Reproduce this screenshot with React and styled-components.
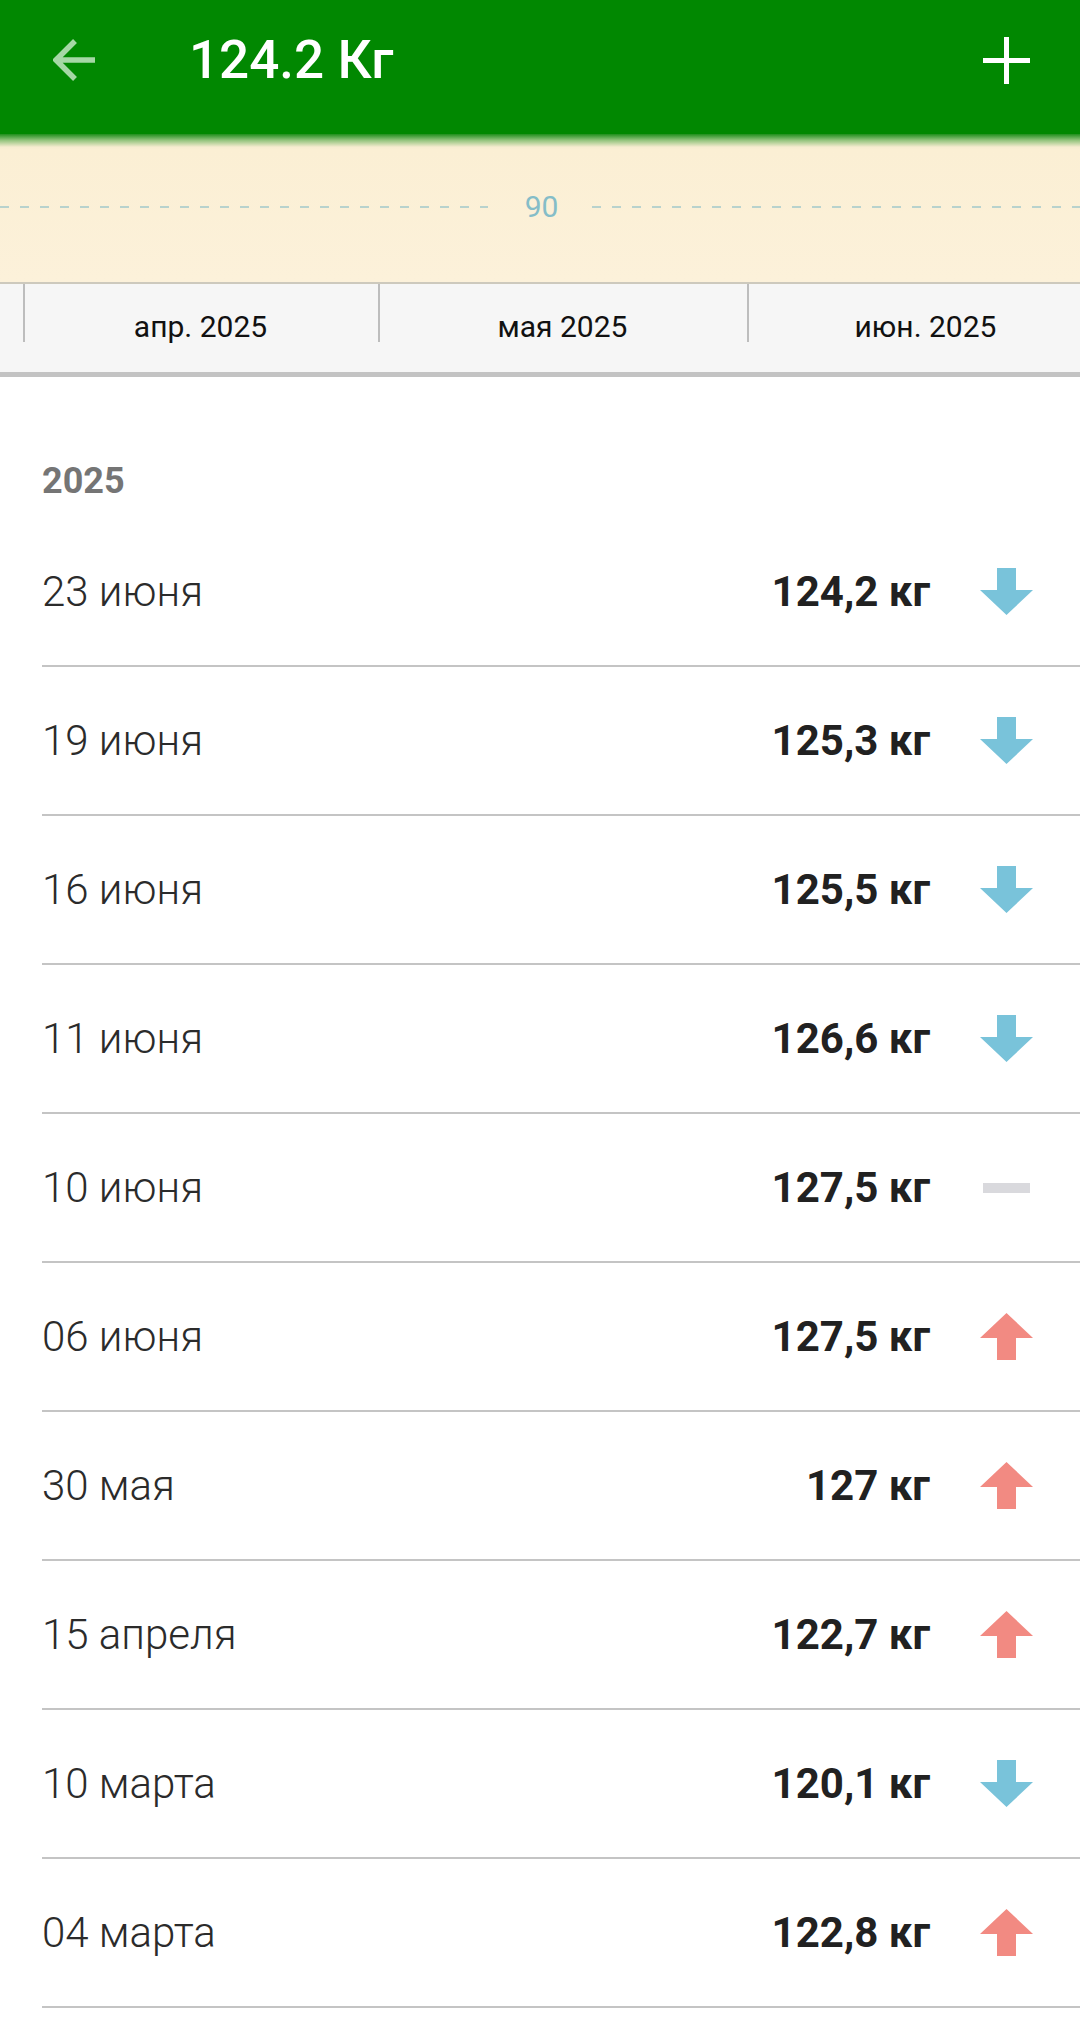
import React from "react";
import styled, { createGlobalStyle } from "styled-components";

const GlobalStyle = createGlobalStyle`
  html, body { margin: 0; padding: 0; background: #ffffff; }
  body { font-family: Roboto, "Noto Sans", "Liberation Sans", sans-serif; -webkit-font-smoothing: antialiased; }
  * { box-sizing: border-box; }
`;

const Page = styled.div`
  width: 1080px;
  min-height: 2019px;
  background: #ffffff;
  overflow: hidden;
`;

const Toolbar = styled.header`
  height: 134px;
  background: #018801;
  display: flex;
  align-items: center;
  padding: 0 50px 14px 53px;
`;

const IconButton = styled.div`
  display: flex;
  align-items: center;
  justify-content: center;
  width: ${(p) => p.$w}px;
  height: ${(p) => p.$h}px;
  flex-shrink: 0;
`;

const Title = styled.h1`
  margin: 0 0 0 92px;
  flex: 1;
  font-family: Roboto, sans-serif;
  font-weight: 500;
  font-size: 53px;
  line-height: 60px;
  color: #ffffff;
`;

const Chart = styled.section`
  height: 148px;
  background: linear-gradient(
    to bottom,
    #1f8f1c 0px,
    #8fc27a 6px,
    #f6ecd0 13px,
    #fbefd4 16px,
    #fcf1da 148px
  );
  padding-top: 58px;
`;

const GridLine = styled.div`
  display: flex;
  align-items: center;
  height: 30px;
`;

const Dash = styled.div`
  flex: 1;
  height: 2px;
  background-image: repeating-linear-gradient(
    to right,
    #b8d2cd 0px,
    #b8d2cd 9px,
    transparent 9px,
    transparent 20px
  );
`;

const GridLabel = styled.span`
  padding: 0 34px 0 37px;
  font-size: 30px;
  line-height: 30px;
  color: #85bdc8;
`;

const Axis = styled.div`
  height: 95px;
  background: #f6f6f6;
  border-top: 2px solid #cdc9bd;
  border-bottom: 5px solid #c3c3c3;
  display: flex;
  overflow: hidden;
`;

const AxisLead = styled.div`
  width: 23px;
  flex-shrink: 0;
`;

const Month = styled.div`
  position: relative;
  width: ${(p) => p.$w}px;
  flex-shrink: 0;
  display: flex;
  justify-content: center;
  padding-top: 26px;
  font-size: 30px;
  line-height: 34px;
  color: #111111;

  &::before {
    content: "";
    position: absolute;
    left: 0;
    top: 0;
    width: 2px;
    height: 58px;
    background: #bdbdbd;
  }
`;

const Year = styled.h2`
  margin: 0;
  height: 141px;
  padding: 86px 42px 0;
  font-size: 36px;
  line-height: 36px;
  font-weight: 700;
  color: #757575;
`;

const Row = styled.div`
  height: 149px;
  margin-left: 42px;
  border-bottom: 2px solid #c4c4c4;
  display: flex;
  align-items: center;
`;

const DateText = styled.span`
  flex: 1;
  font-size: 42px;
  font-weight: 300;
  color: #2b2b2b;
  line-height: 50px;
`;

const Weight = styled.span`
  font-size: 42px;
  font-weight: 700;
  color: #212121;
  line-height: 50px;
`;

const Trend = styled.div`
  width: 53px;
  height: 47px;
  margin: 0 47px 0 50px;
  display: flex;
  align-items: center;
  justify-content: center;
  flex-shrink: 0;
`;

const Flat = styled.div`
  width: 47px;
  height: 10px;
  background: #d9d9dd;
`;

const BackIcon = () => (
  <svg width="44" height="44" viewBox="0 0 44 44">
    <path
      d="M42 22H5 M22 3L3 22L22 41"
      fill="none"
      stroke="#a6d8a6"
      strokeWidth="5.5"
    />
  </svg>
);

const PlusIcon = () => (
  <svg width="47" height="47" viewBox="0 0 47 47">
    <path d="M23.5 0V47 M0 23.5H47" fill="none" stroke="#ffffff" strokeWidth="5" />
  </svg>
);

const Arrow = ({ dir }) => (
  <svg width="53" height="47" viewBox="0 0 53 47">
    {dir === "down" ? (
      <polygon points="17,0 36,0 36,22 53,22 26.5,47 0,22 17,22" fill="#79c3da" />
    ) : (
      <polygon points="26.5,0 53,25 36,25 36,47 17,47 17,25 0,25" fill="#f28a82" />
    )}
  </svg>
);

const entries = [
  { date: "23 июня", value: "124,2 кг", trend: "down" },
  { date: "19 июня", value: "125,3 кг", trend: "down" },
  { date: "16 июня", value: "125,5 кг", trend: "down" },
  { date: "11 июня", value: "126,6 кг", trend: "down" },
  { date: "10 июня", value: "127,5 кг", trend: "flat" },
  { date: "06 июня", value: "127,5 кг", trend: "up" },
  { date: "30 мая", value: "127 кг", trend: "up" },
  { date: "15 апреля", value: "122,7 кг", trend: "up" },
  { date: "10 марта", value: "120,1 кг", trend: "down" },
  { date: "04 марта", value: "122,8 кг", trend: "up" },
];

const months = [
  { label: "апр. 2025", w: 355 },
  { label: "мая 2025", w: 369 },
  { label: "июн. 2025", w: 357 },
];

export default function App() {
  return (
    <Page>
      <GlobalStyle />
      <Toolbar>
        <IconButton $w={44} $h={44}>
          <BackIcon />
        </IconButton>
        <Title>124.2 Кг</Title>
        <IconButton $w={47} $h={47}>
          <PlusIcon />
        </IconButton>
      </Toolbar>
      <Chart>
        <GridLine>
          <Dash />
          <GridLabel>90</GridLabel>
          <Dash />
        </GridLine>
      </Chart>
      <Axis>
        <AxisLead />
        {months.map((m) => (
          <Month key={m.label} $w={m.w}>
            {m.label}
          </Month>
        ))}
      </Axis>
      <Year>2025</Year>
      {entries.map((e) => (
        <Row key={e.date}>
          <DateText>{e.date}</DateText>
          <Weight>{e.value}</Weight>
          <Trend>{e.trend === "flat" ? <Flat /> : <Arrow dir={e.trend} />}</Trend>
        </Row>
      ))}
    </Page>
  );
}
